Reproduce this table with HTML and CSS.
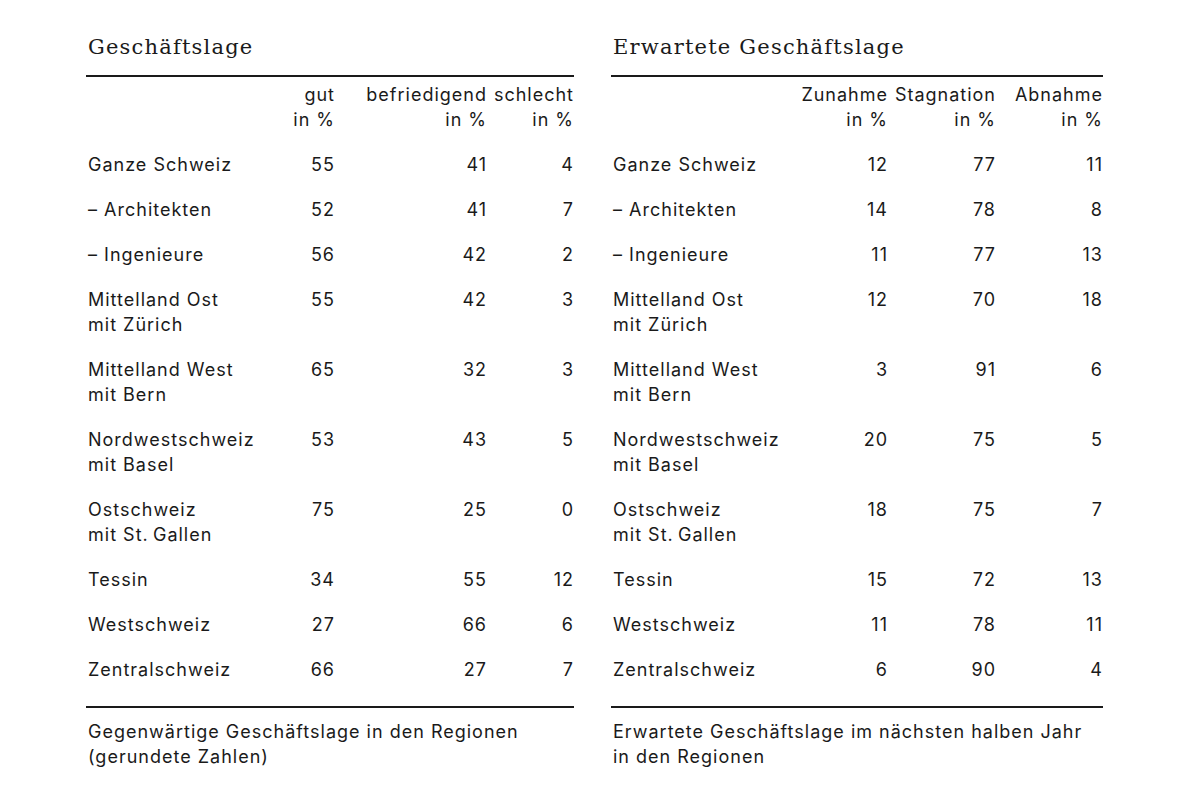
FILE: index.html
```html
<!DOCTYPE html>
<html lang="de">
<head>
<meta charset="utf-8">
<title>Geschäftslage</title>
<link rel="stylesheet" href="styles.css">
</head>
<body>
<main class="page">
  <section class="panel panel-left">
    <h2 class="title">Geschäftslage</h2>
    <table class="data">
      <thead>
        <tr>
          <th class="label"></th>
          <th class="num c-gut">gut<br>in %</th>
          <th class="num c-bef">befriedigend<br>in %</th>
          <th class="num c-sch">schlecht<br>in %</th>
        </tr>
      </thead>
      <tbody>
        <tr><td class="label">Ganze Schweiz</td><td class="num">55</td><td class="num">41</td><td class="num">4</td></tr>
        <tr><td class="label">– Architekten</td><td class="num">52</td><td class="num">41</td><td class="num">7</td></tr>
        <tr><td class="label">– Ingenieure</td><td class="num">56</td><td class="num">42</td><td class="num">2</td></tr>
        <tr><td class="label">Mittelland Ost<br>mit Zürich</td><td class="num">55</td><td class="num">42</td><td class="num">3</td></tr>
        <tr><td class="label">Mittelland West<br>mit Bern</td><td class="num">65</td><td class="num">32</td><td class="num">3</td></tr>
        <tr><td class="label">Nordwestschweiz<br>mit Basel</td><td class="num">53</td><td class="num">43</td><td class="num">5</td></tr>
        <tr><td class="label">Ostschweiz<br>mit St.&#8201;Gallen</td><td class="num">75</td><td class="num">25</td><td class="num">0</td></tr>
        <tr><td class="label">Tessin</td><td class="num">34</td><td class="num">55</td><td class="num">12</td></tr>
        <tr><td class="label">Westschweiz</td><td class="num">27</td><td class="num">66</td><td class="num">6</td></tr>
        <tr><td class="label">Zentralschweiz</td><td class="num">66</td><td class="num">27</td><td class="num">7</td></tr>
      </tbody>
    </table>
    <p class="caption">Gegenwärtige Geschäftslage in den Regionen<br>(gerundete Zahlen)</p>
  </section>

  <section class="panel panel-right">
    <h2 class="title">Erwartete Geschäftslage</h2>
    <table class="data">
      <thead>
        <tr>
          <th class="label"></th>
          <th class="num c-zu">Zunahme<br>in %</th>
          <th class="num c-st">Stagnation<br>in %</th>
          <th class="num c-ab">Abnahme<br>in %</th>
        </tr>
      </thead>
      <tbody>
        <tr><td class="label">Ganze Schweiz</td><td class="num">12</td><td class="num">77</td><td class="num">11</td></tr>
        <tr><td class="label">– Architekten</td><td class="num">14</td><td class="num">78</td><td class="num">8</td></tr>
        <tr><td class="label">– Ingenieure</td><td class="num">11</td><td class="num">77</td><td class="num">13</td></tr>
        <tr><td class="label">Mittelland Ost<br>mit Zürich</td><td class="num">12</td><td class="num">70</td><td class="num">18</td></tr>
        <tr><td class="label">Mittelland West<br>mit Bern</td><td class="num">3</td><td class="num">91</td><td class="num">6</td></tr>
        <tr><td class="label">Nordwestschweiz<br>mit Basel</td><td class="num">20</td><td class="num">75</td><td class="num">5</td></tr>
        <tr><td class="label">Ostschweiz<br>mit St.&#8201;Gallen</td><td class="num">18</td><td class="num">75</td><td class="num">7</td></tr>
        <tr><td class="label">Tessin</td><td class="num">15</td><td class="num">72</td><td class="num">13</td></tr>
        <tr><td class="label">Westschweiz</td><td class="num">11</td><td class="num">78</td><td class="num">11</td></tr>
        <tr><td class="label">Zentralschweiz</td><td class="num">6</td><td class="num">90</td><td class="num">4</td></tr>
      </tbody>
    </table>
    <p class="caption">Erwartete Geschäftslage im nächsten halben Jahr<br>in den Regionen</p>
  </section>
</main>
</body>
</html>
```

FILE: styles.css
```css
* { box-sizing: border-box; }

html, body {
  margin: 0;
  padding: 0;
  background: #ffffff;
}

body {
  color: #1a1a1a;
  font-family: "Inter", "Liberation Sans", sans-serif;
  font-size: 18px;
  letter-spacing: 1px;
  line-height: 25px;
}

.page {
  display: grid;
  grid-template-columns: 488px 492px;
  column-gap: 37px;
  padding: 28px 0 0 86px;
}

.panel {
  display: flex;
  flex-direction: column;
}

.title {
  margin: 0;
  padding-left: 2px;
  font-family: "DejaVu Serif", "Liberation Serif", serif;
  font-weight: normal;
  font-size: 21px;
  letter-spacing: 1.2px;
  line-height: 38px;
  height: 49px;
  border-bottom: 2px solid #1a1a1a;
}

.data {
  width: 100%;
  border-collapse: collapse;
  border-bottom: 2px solid #1a1a1a;
}

.data th {
  font-weight: normal;
  padding: 5px 0 10px 0;
  vertical-align: top;
}

.data td {
  padding: 10px 0;
  vertical-align: top;
}

.data tbody tr:last-child td {
  padding-bottom: 24px;
}

.label {
  text-align: left;
  padding-left: 2px !important;
}

.num {
  text-align: right;
  white-space: nowrap;
}

.panel-left .label { width: 180px; }
.panel-left .c-gut { width: 69px; }
.panel-left .c-bef { width: 152px; }
.panel-left .c-sch { width: 87px; }

.panel-right .label { width: 180px; }
.panel-right .c-zu { width: 97px; }
.panel-right .c-st { width: 108px; }
.panel-right .c-ab { width: 107px; }

.caption {
  margin: 0;
  padding: 11px 0 0 2px;
}
```
